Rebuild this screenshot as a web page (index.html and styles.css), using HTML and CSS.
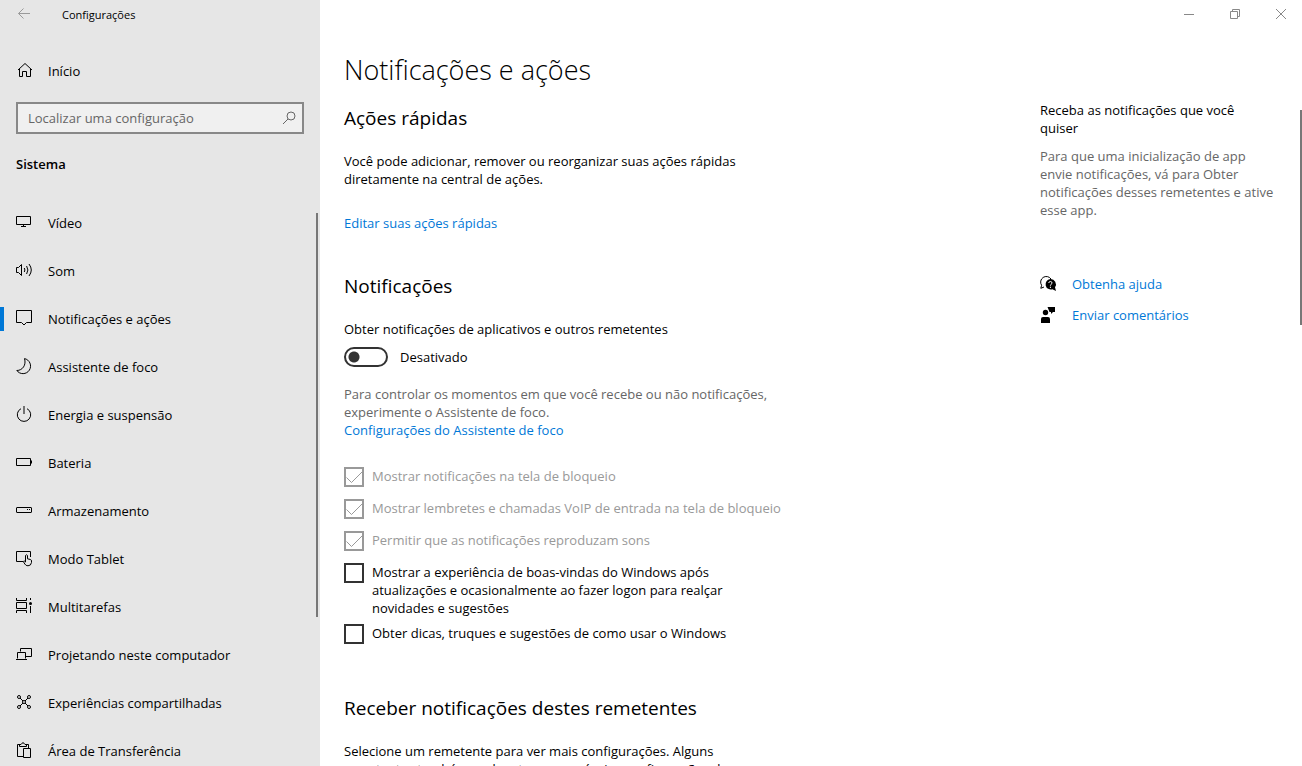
FILE: index.html
```
<!DOCTYPE html>
<html lang="pt-BR">
<head>
  <meta charset="UTF-8">
  <meta name="viewport" content="width=device-width, initial-scale=1.0">
  <title>Configurações</title>
  <link rel="stylesheet" href="styles.css">
</head>
<body>
  <div class="window">
    <aside class="sidebar">
      <header class="titlebar">
        <button class="back" aria-label="Voltar">
          <svg class="icon" width="14" height="14" viewBox="0 0 14 14"><path d="M13 6.500H1.500M6.500 1.500l-5 5 5 5"/></svg>
        </button>
        <span class="app-name">Configurações</span>
      </header>

      <a class="nav-link home" href="#">
        <svg class="icon" width="16" height="16" viewBox="0 0 16 16"><path d="M2 8L9 1.500 16 8M3.500 7v7.500h3v-5h4v5h4V7"/></svg>
        Início
      </a>

      <div class="search">
        <input type="text" placeholder="Localizar uma configuração" aria-label="Localizar uma configuração">
        <svg class="icon" width="14" height="14" viewBox="0 0 14 14"><circle cx="9" cy="5" r="4"/><path d="M6 8L1 13"/></svg>
      </div>

      <h2 class="group-title">Sistema</h2>

      <nav class="nav">
        <a class="nav-link" href="#">
          <svg class="icon" width="16" height="16" viewBox="0 0 16 16"><path d="M.5 2.500h14v8H.5zM7.500 10.500v2M5 12.500h5"/></svg>
          Vídeo
        </a>
        <a class="nav-link" href="#">
          <svg class="icon" width="16" height="16" viewBox="0 0 16 16"><path d="M.5 5.500h2l3-3v11l-3-3h-2zM8.300 6q1.200 2 0 4M10.600 4q2.600 4 0 8M13 2q4.600 6 0 12"/></svg>
          Som
        </a>
        <a class="nav-link active" href="#">
          <svg class="icon" width="16" height="16" viewBox="0 0 16 16"><path d="M.5.5h15v12h-5L8 15l-2.500-2.500h-5z"/></svg>
          Notificações e ações
        </a>
        <a class="nav-link" href="#">
          <svg class="icon" width="16" height="16" viewBox="0 0 16 16"><path d="M8.500.6A7.600 7.600 0 1 1 .8 12.500C6.500 12.500 10.500 7 8.500.6z"/></svg>
          Assistente de foco
        </a>
        <a class="nav-link" href="#">
          <svg class="icon" width="16" height="16" viewBox="0 0 16 16"><path d="M8 0v8M5 2.700a6.700 6.700 0 1 0 6 0"/></svg>
          Energia e suspensão
        </a>
        <a class="nav-link" href="#">
          <svg class="icon" width="16" height="16" viewBox="0 0 16 16"><path d="M.5 4.500h14v7H.5zM15.500 6.500v3"/></svg>
          Bateria
        </a>
        <a class="nav-link" href="#">
          <svg class="icon" width="16" height="16" viewBox="0 0 16 16"><rect x=".5" y="5.500" width="15" height="5" rx=".5"/><path d="M11 7.500h1M13 7.500h1"/></svg>
          Armazenamento
        </a>
        <a class="nav-link" href="#">
          <svg class="icon" width="16" height="16" viewBox="0 0 16 16"><path d="M7 11.500H.5v-10h14V7M9.500 12V5.500q1-1.500 2 0v3.300l3 .7q1 .4 1 1.500v1.500q-.5 3.300-3.500 3.300-2.200 0-3.200-1.800L7.300 11.500q.7-1.500 2.200.5"/></svg>
          Modo Tablet
        </a>
        <a class="nav-link" href="#">
          <svg class="icon" width="16" height="16" viewBox="0 0 16 16"><path d="M.5 0v2.500h10V0M.5 4.500h10v6H.5zM.5 15v-2.500h10V15M14.500 0v2M14.500 8v7"/><circle class="dot" cx="14.500" cy="5.500" r="1.500"/></svg>
          Multitarefas
        </a>
        <a class="nav-link" href="#">
          <svg class="icon" width="16" height="16" viewBox="0 0 16 16"><path d="M4.500 5.500v-3h11v8h-6M1.500 12.500v-6h8v6M0 13.500h11"/></svg>
          Projetando neste computador
        </a>
        <a class="nav-link" href="#">
          <svg class="icon" width="16" height="16" viewBox="0 0 16 16"><circle cx="3" cy="3" r="1.500"/><circle cx="13" cy="3" r="1.500"/><circle cx="3" cy="13" r="1.500"/><circle cx="13" cy="13" r="1.500"/><circle cx="8" cy="8" r="1.500"/><path d="M4 4l3 3M12 4L9 7M4 12l3-3M12 12L9 9"/></svg>
          Experiências compartilhadas
        </a>
        <a class="nav-link" href="#">
          <svg class="icon" width="16" height="16" viewBox="0 0 16 16"><path d="M7 14.500H1.500v-12h3M9.500 2.500h3V6M3.500 4.500v-2H5q2-3.500 4 0h1.500v2zM7.500 6.500h7v9h-7z"/></svg>
          Área de Transferência
        </a>
      </nav>
      <div class="scrollbar sidebar-scroll"></div>
    </aside>

    <main class="main">
      <header class="titlebar controls">
        <button aria-label="Minimizar"><svg class="icon" width="10" height="10" viewBox="0 0 10 10"><path d="M0 5.500h10"/></svg></button>
        <button aria-label="Restaurar"><svg class="icon" width="10" height="10" viewBox="0 0 10 10"><path d="M.5 2.500h7v7h-7zM2.500 2.500v-2h7v7h-2"/></svg></button>
        <button aria-label="Fechar"><svg class="icon" width="10" height="10" viewBox="0 0 10 10"><path d="M0 0l10 10M10 0L0 10"/></svg></button>
      </header>

      <div class="content">
        <div class="settings">
          <h1>Notificações e ações</h1>

          <section class="quick">
            <h2>Ações rápidas</h2>
            <p>Você pode adicionar, remover ou reorganizar suas ações rápidas diretamente na central de ações.</p>
            <a class="link" href="#">Editar suas ações rápidas</a>
          </section>

          <section class="notifications">
            <h2>Notificações</h2>
            <p id="toggleLabel">Obter notificações de aplicativos e outros remetentes</p>
            <label class="toggle">
              <input type="checkbox" role="switch" aria-describedby="toggleLabel">
              Desativado
            </label>
            <p class="muted">Para controlar os momentos em que você recebe ou não notificações, experimente o Assistente de foco.</p>
            <a class="link" href="#">Configurações do Assistente de foco</a>

            <div class="checks">
              <label class="check disabled">
                <span class="box"><input type="checkbox" checked disabled><svg class="icon" width="20" height="20" viewBox="0 0 20 20"><path d="M2.500 10.500l5 5L18 5"/></svg></span>
                <span>Mostrar notificações na tela de bloqueio</span>
              </label>
              <label class="check disabled">
                <span class="box"><input type="checkbox" checked disabled><svg class="icon" width="20" height="20" viewBox="0 0 20 20"><path d="M2.500 10.500l5 5L18 5"/></svg></span>
                <span>Mostrar lembretes e chamadas VoIP de entrada na tela de bloqueio</span>
              </label>
              <label class="check disabled">
                <span class="box"><input type="checkbox" checked disabled><svg class="icon" width="20" height="20" viewBox="0 0 20 20"><path d="M2.500 10.500l5 5L18 5"/></svg></span>
                <span>Permitir que as notificações reproduzam sons</span>
              </label>
              <label class="check">
                <span class="box"><input type="checkbox"></span>
                <span>Mostrar a experiência de boas-vindas do Windows após atualizações e ocasionalmente ao fazer logon para realçar novidades e sugestões</span>
              </label>
              <label class="check">
                <span class="box"><input type="checkbox"></span>
                <span>Obter dicas, truques e sugestões de como usar o Windows</span>
              </label>
            </div>
          </section>

          <section class="senders">
            <h2>Receber notificações destes remetentes</h2>
            <p>Selecione um remetente para ver mais configurações. Alguns remetentes também podem ter suas próprias configurações de notificação.</p>
          </section>
        </div>

        <aside class="help">
          <h3>Receba as notificações que você quiser</h3>
          <p class="muted">Para que uma inicialização de app envie notificações, vá para Obter notificações desses remetentes e ative esse app.</p>
          <a class="help-link" href="#">
            <svg class="icon" width="16" height="16" viewBox="0 0 16 16"><path d="M4 11L.8 12.300l.8-3A5.300 5.300 0 1 1 11 3"/><path class="solid" d="M10.200 3a5.300 5.300 0 1 0 2.300 10.300l3.500 1.700-1-3.700A5.300 5.300 0 0 0 10.200 3z"/><path class="question" d="M8.700 7q.2-1.500 1.700-1.500T12 6.900q0 .8-.9 1.400-.7.500-.7 1.400M10.400 10.700v1.300"/></svg>
            Obtenha ajuda
          </a>
          <a class="help-link" href="#">
            <svg class="icon" width="16" height="16" viewBox="0 0 16 16"><circle class="solid" cx="5.500" cy="5.500" r="2.700"/><path class="solid" d="M1 16v-4q0-2 2-2h5q2 0 2 2v4zM7.500 0H15v5h-2l-2 2V5H9.500z"/></svg>
            Enviar comentários
          </a>
        </aside>
      </div>
      <div class="scrollbar main-scroll"></div>
    </main>
  </div>
</body>
</html>
```
FILE: styles.css
```
* {
  box-sizing: border-box;
}
body {
  margin: 0;
  font-family: "Open Sans", "Noto Sans", sans-serif;
  font-size: 13px;
  line-height: 18px;
  color: #000;
  background: #fff;
}
h1, h2, h3, p {
  margin: 0;
}
a {
  text-decoration: none;
}
button {
  border: none;
  background: none;
  padding: 0;
}
.window {
  display: flex;
  height: 100vh;
  overflow: hidden;
}
.icon {
  flex: none;
  fill: none;
  stroke: currentColor;
  stroke-width: 1;
  overflow: visible;
}
.icon .dot {
  fill: currentColor;
  stroke: none;
}
.icon .solid {
  fill: currentColor;
  stroke: none;
}
.icon .question {
  stroke: #fff;
}

/* sidebar */
.sidebar {
  position: relative;
  flex: 0 0 320px;
  background: #e6e6e6;
  overflow: hidden;
}
.titlebar {
  display: flex;
  align-items: center;
  height: 30px;
}
.back {
  display: flex;
  align-items: center;
  justify-content: center;
  width: 48px;
  height: 28px;
  color: #999;
  align-self: flex-start;
}
.app-name {
  margin-left: 14px;
  font-size: 11px;
}
.nav-link {
  display: flex;
  align-items: center;
  gap: 16px;
  height: 48px;
  padding-left: 16px;
  color: #000;
}
.nav-link .icon {
  margin-bottom: 2px;
}
.home {
  margin-top: 17px;
}
.search {
  display: flex;
  align-items: center;
  height: 32px;
  margin: 7px 16px 0;
  padding: 0 6px 0 10px;
  background: #f0f0f0;
  border: 2px solid #888;
  color: #666;
}
.search input {
  flex: 1;
  min-width: 0;
  padding: 0;
  border: none;
  outline: none;
  background: none;
  font: inherit;
}
.search input::placeholder {
  color: #666;
}
.group-title {
  margin: 21px 16px 26px;
  font-size: 13px;
  line-height: 18px;
  font-weight: 600;
}
.active {
  background: linear-gradient(#0078d7, #0078d7) left center / 4px 24px no-repeat;
}
.scrollbar {
  position: absolute;
  width: 2px;
  background: #777;
}
.sidebar-scroll {
  right: 2px;
  top: 213px;
  height: 404px;
}
.main-scroll {
  right: 0;
  top: 110px;
  height: 215px;
}

/* main area */
.main {
  position: relative;
  flex: 1;
  min-width: 0;
}
.controls {
  justify-content: flex-end;
  gap: 4px;
}
.controls button {
  width: 42px;
  height: 28px;
  color: #888;
  align-self: flex-start;
}
.content {
  display: flex;
  justify-content: space-between;
  padding: 22px 27px 0 24px;
}
.settings {
  flex: 0 1 440px;
}
h1 {
  font-size: 27px;
  line-height: 36px;
  font-weight: 300;
}
.settings h2 {
  font-size: 19px;
  line-height: 28px;
  font-weight: 400;
  margin-bottom: 20px;
}
.link, .help-link {
  color: #0078d7;
}
.muted {
  color: #666;
}
.quick {
  margin-top: 16px;
}
.quick .link {
  display: inline-block;
  margin-top: 26px;
}
.notifications {
  margin-top: 40px;
}
.toggle {
  display: flex;
  align-items: center;
  gap: 12px;
  margin: 9px 0 18px;
}
.toggle input {
  appearance: none;
  width: 44px;
  height: 20px;
  margin: 0;
  border: 2px solid #333;
  border-radius: 10px;
  background: radial-gradient(circle at 8px 8px, #333 5px, transparent 6px);
}
.checks {
  margin-top: 28px;
}
.check {
  display: flex;
  gap: 8px;
  min-height: 32px;
  padding-bottom: 7px;
}
.box {
  display: grid;
  flex: none;
  width: 20px;
  height: 20px;
}
.box input, .box svg {
  grid-area: 1 / 1;
}
.box input {
  appearance: none;
  width: 20px;
  height: 20px;
  margin: 0;
  border: 2px solid #333;
}
.disabled, .disabled input {
  color: #999;
  border-color: #999;
}
.senders {
  margin-top: 38px;
}

/* help column */
.help {
  flex: 0 0 235px;
  margin-top: 49px;
}
.help h3 {
  font-size: 13px;
  line-height: 18px;
  font-weight: 400;
  margin-bottom: 10px;
}
.help .muted {
  margin-bottom: 56px;
}
.help-link {
  display: flex;
  align-items: center;
  gap: 16px;
  margin-bottom: 13px;
}
.help-link .icon {
  color: #000;
}
```
